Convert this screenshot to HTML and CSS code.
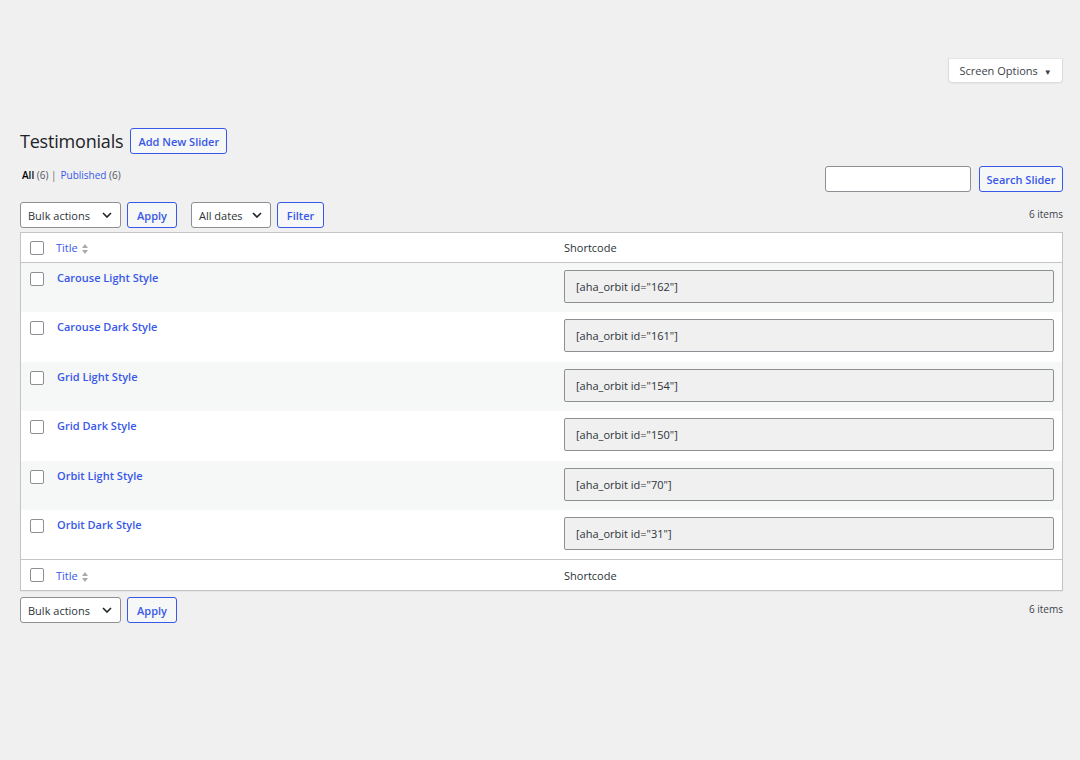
FILE: index.html
```html
<!DOCTYPE html>
<html lang="en">
<head>
    <meta charset="UTF-8">
    <meta name="viewport" content="width=device-width, initial-scale=1.0">
    <title>Testimonials</title>
    <link rel="stylesheet" href="styles.css">
</head>
<body>

    <!-- Screen options pogas rinda -->
    <div class="screen-meta">
        <button class="screen-options">Screen Options <span class="caret">&#9660;</span></button>
    </div>

    <div class="wrap">
        <!-- Virsraksts -->
        <div class="page-head">
            <h1>Testimonials</h1>
            <a href="#" class="btn-outline add-new">Add New Slider</a>
        </div>

        <!-- Filtri un meklēšana -->
        <div class="filter-row">
            <ul class="subsubsub">
                <li><a href="#" class="current">All <span class="count">(6)</span></a> |</li>
                <li><a href="#">Published <span class="count">(6)</span></a></li>
            </ul>
            <div class="search-box">
                <input type="search" class="search-input">
                <button class="btn-outline">Search Slider</button>
            </div>
        </div>

        <div class="tablenav">
            <div class="actions">
                <div class="select select-bulk">Bulk actions <svg viewBox="0 0 10 6" class="chev"><path d="M1 1l4 4 4-4" /></svg></div>
                <button class="btn-outline">Apply</button>
                <div class="select select-dates">All dates <svg viewBox="0 0 10 6" class="chev"><path d="M1 1l4 4 4-4" /></svg></div>
                <button class="btn-outline btn-filter">Filter</button>
            </div>
            <span class="num">6 items</span>
        </div>

        <!-- Slaideru tabula -->
        <table class="list-table">
            <thead>
                <tr>
                    <th class="col-cb"><span class="cb"></span></th>
                    <th class="col-title"><a href="#">Title</a> <span class="sort"><i class="up"></i><i class="down"></i></span></th>
                    <th class="col-code">Shortcode</th>
                </tr>
            </thead>
            <tbody>
                <tr class="alt">
                    <td class="col-cb"><span class="cb"></span></td>
                    <td class="col-title"><a href="#">Carouse Light Style</a></td>
                    <td class="col-code"><div class="code">[aha_orbit id="162"]</div></td>
                </tr>
                <tr>
                    <td class="col-cb"><span class="cb"></span></td>
                    <td class="col-title"><a href="#">Carouse Dark Style</a></td>
                    <td class="col-code"><div class="code">[aha_orbit id="161"]</div></td>
                </tr>
                <tr class="alt">
                    <td class="col-cb"><span class="cb"></span></td>
                    <td class="col-title"><a href="#">Grid Light Style</a></td>
                    <td class="col-code"><div class="code">[aha_orbit id="154"]</div></td>
                </tr>
                <tr>
                    <td class="col-cb"><span class="cb"></span></td>
                    <td class="col-title"><a href="#">Grid Dark Style</a></td>
                    <td class="col-code"><div class="code">[aha_orbit id="150"]</div></td>
                </tr>
                <tr class="alt">
                    <td class="col-cb"><span class="cb"></span></td>
                    <td class="col-title"><a href="#">Orbit Light Style</a></td>
                    <td class="col-code"><div class="code">[aha_orbit id="70"]</div></td>
                </tr>
                <tr>
                    <td class="col-cb"><span class="cb"></span></td>
                    <td class="col-title"><a href="#">Orbit Dark Style</a></td>
                    <td class="col-code"><div class="code">[aha_orbit id="31"]</div></td>
                </tr>
            </tbody>
            <tfoot>
                <tr>
                    <th class="col-cb"><span class="cb"></span></th>
                    <th class="col-title"><a href="#">Title</a> <span class="sort"><i class="up"></i><i class="down"></i></span></th>
                    <th class="col-code">Shortcode</th>
                </tr>
            </tfoot>
        </table>

        <div class="tablenav tablenav-bottom">
            <div class="actions">
                <div class="select select-bulk">Bulk actions <svg viewBox="0 0 10 6" class="chev"><path d="M1 1l4 4 4-4" /></svg></div>
                <button class="btn-outline">Apply</button>
            </div>
            <span class="num">6 items</span>
        </div>
    </div>

</body>
</html>
```

FILE: styles.css
```css
body {
    margin: 0;
    background: #f0f0f1;
    color: #3c434a;
    font-family: "Open Sans", "Noto Sans", sans-serif;
    font-size: 11px;
}

a {
    color: #3858e9;
    text-decoration: none;
}

/* augšējā josla */
.screen-meta {
    display: flex;
    justify-content: flex-end;
    padding: 58px 17px 0 0;
}

.screen-options {
    width: 115px;
    height: 25px;
    background: #fff;
    border: 1px solid #dcdcde;
    border-top-color: #e4e4e6;
    border-radius: 0 0 4px 4px;
    color: #3c434a;
    font-family: inherit;
    font-size: 11px;
    box-shadow: 0 1px 1px rgba(0, 0, 0, 0.04);
}

.caret {
    font-size: 8px;
    margin-left: 3px;
}

.wrap {
    padding: 0 17px 0 20px;
}

.page-head {
    display: flex;
    align-items: center;
    gap: 7px;
    margin-top: 45px;
}

h1 {
    margin: 0;
    font-size: 18px;
    font-weight: 400;
    color: #1d2327;
    letter-spacing: -0.2px;
}

.btn-outline {
    display: inline-flex;
    align-items: center;
    justify-content: center;
    height: 26px;
    box-sizing: border-box;
    padding: 0 10px;
    background: #f6f7f7;
    border: 1px solid #3858e9;
    border-radius: 3px;
    color: #3858e9;
    font-family: inherit;
    font-size: 11px;
    font-weight: 600;
}

.add-new {
    width: 97px;
    padding: 0;
}

.filter-row {
    display: flex;
    justify-content: space-between;
    align-items: flex-start;
    margin-top: 12px;
}

.subsubsub {
    list-style: none;
    margin: 2px 0 0 2px;
    padding: 0;
    display: flex;
    gap: 4px;
    font-size: 10px;
    color: #646970;
}

.subsubsub .current {
    color: #000;
    font-weight: 600;
}

.count {
    color: #50575e;
    font-weight: 400;
}

.search-box {
    display: flex;
    gap: 8px;
}

.search-input {
    width: 146px;
    height: 26px;
    box-sizing: border-box;
    border: 1px solid #8c8f94;
    border-radius: 3px;
    background: #fff;
    margin: 0;
}

.search-box .btn-outline {
    width: 84px;
    padding: 0;
}

.tablenav {
    display: flex;
    justify-content: space-between;
    align-items: center;
    margin-top: 10px;
    height: 26px;
}

.actions {
    display: flex;
    gap: 6px;
}

.actions .btn-outline {
    width: 50px;
    padding: 0;
}

.actions .btn-filter {
    width: 47px;
}

.select {
    display: flex;
    align-items: center;
    justify-content: space-between;
    height: 26px;
    box-sizing: border-box;
    padding: 0 8px 0 7px;
    background: #fff;
    border: 1px solid #8c8f94;
    border-radius: 3px;
    color: #2c3338;
    font-size: 11px;
}

.select-bulk {
    width: 101px;
}

.select-dates {
    width: 80px;
    margin-left: 8px;
}

.chev {
    width: 10px;
    height: 6px;
    fill: none;
    stroke: #1d2327;
    stroke-width: 1.6;
}

.num {
    color: #3c434a;
    font-size: 10px;
    margin-top: -2px;
}

/* tabula */
.list-table {
    width: 100%;
    margin-top: 4px;
    border-collapse: collapse;
    background: #fff;
    border: 1px solid #c3c4c7;
    box-shadow: 0 1px 1px rgba(0, 0, 0, 0.04);
}

.list-table th {
    height: 29px;
    padding: 0 8px;
    text-align: left;
    font-weight: 400;
    color: #2c3338;
    font-size: 11px;
}

.list-table thead th {
    border-bottom: 1px solid #c3c4c7;
}

.list-table tfoot th {
    border-top: 1px solid #c3c4c7;
    height: 30px;
}

.list-table td {
    height: 49.5px;
    box-sizing: border-box;
    padding: 0 8px;
    vertical-align: top;
}

.list-table tr.alt td {
    background: #f6f7f7;
}

.list-table th.col-cb,
.list-table td.col-cb {
    width: 15px;
    padding: 0 0 0 9px;
}

.list-table td.col-cb {
    padding-top: 9px;
}

.list-table th.col-title,
.list-table td.col-title {
    width: 493px;
    padding-left: 11px;
}

.list-table td.col-title {
    padding-left: 12px;
    padding-top: 7px;
}

.list-table td.col-title a {
    font-weight: 600;
}

.list-table th.col-code,
.list-table td.col-code {
    padding-left: 7px;
}

.list-table td.col-code {
    padding-top: 7px;
}

.cb {
    display: block;
    width: 14px;
    height: 14px;
    box-sizing: border-box;
    border: 1px solid #8c8f94;
    border-radius: 2px;
    background: #fff;
}

.sort {
    display: inline-flex;
    flex-direction: column;
    gap: 2px;
    vertical-align: middle;
    margin-left: 1px;
}

.sort i {
    width: 0;
    height: 0;
    border-left: 3.5px solid transparent;
    border-right: 3.5px solid transparent;
}

.sort .up {
    border-bottom: 4px solid #a7aaad;
}

.sort .down {
    border-top: 4px solid #a7aaad;
}

.code {
    height: 33px;
    box-sizing: border-box;
    display: flex;
    align-items: center;
    padding-left: 11px;
    background: #f0f0f1;
    border: 1px solid #8c8f94;
    border-radius: 2px;
    color: #2c3338;
    font-size: 11px;
}

.tablenav-bottom {
    margin-top: 6px;
}
```
